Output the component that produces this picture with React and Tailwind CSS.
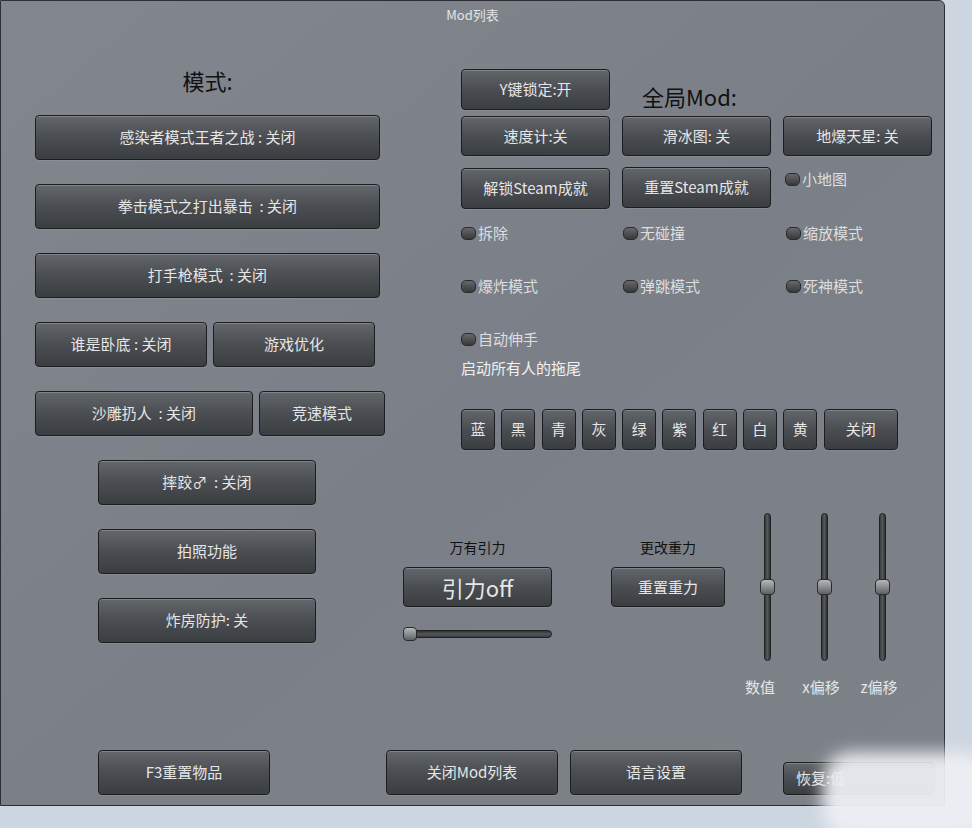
import React from "react";

const font = { fontFamily: '"Noto Sans CJK SC", "Noto Sans", sans-serif' };

// IMGUI style button
function Btn({ className = "", children }) {
  return (
    <div
      className={`flex items-center justify-center whitespace-nowrap rounded-[4px] border border-[#1c1d1f] bg-linear-to-b from-[#63666a] via-[#4a4d51] to-[#3b3e41] text-[15px] text-[#e6e6e6] shadow-[inset_0_1px_0_rgba(255,255,255,0.2),0_1px_0_rgba(255,255,255,0.08)] ${className}`}
    >
      {children}
    </div>
  );
}

function Check({ label }) {
  return (
    <div className="flex h-[20px] items-center gap-[2px] text-[15px] text-[#dedede]">
      <span className="h-[13px] w-[15px] rounded-[5px] border border-[#2a2b2d] bg-linear-to-b from-[#66686b] to-[#37393b]" />
      <span>{label}</span>
    </div>
  );
}

function VSlider({ label, shift }) {
  return (
    <div className="flex w-[20px] flex-col items-center">
      <div className="relative flex h-[148px] w-[20px] justify-center">
        <div className="h-full w-[7px] rounded-full border border-[#1f2123] bg-linear-to-r from-[#3a3c3f] via-[#55585b] to-[#2e3032]" />
        <div className="absolute top-[66px] h-[16px] w-[15px] rounded-[4px] border border-[#2a2b2d] bg-linear-to-b from-[#b4b6b8] via-[#8b8e91] to-[#5e6164]" />
      </div>
      <div className={`mt-[15px] whitespace-nowrap text-[15px] text-[#e6e6e6] ${shift}`}>{label}</div>
    </div>
  );
}

const colors = ["蓝", "黑", "青", "灰", "绿", "紫", "红", "白", "黄"];

export default function App() {
  return (
    <div className="relative h-[828px] w-[972px] overflow-hidden bg-[#cdd6e0]" style={font}>
      <div className="flex h-[806px] w-[945px] flex-col rounded-tr-[6px] border border-[#2b2e34] bg-linear-to-br from-[#82878e] via-[#7b8088] to-[#7d8289]">
        {/* title */}
        <div className="flex h-[27px] items-center justify-center text-[13px] text-[#e2e4e8]">Mod列表</div>

        <div className="flex">
          {/* left column */}
          <div className="w-[399px] pl-[34px] pt-[38px]">
            <div className="mb-[21px] w-[345px] text-center text-[22px] leading-[28px] text-[#111]">模式:</div>
            <div className="flex flex-col gap-[24px]">
              <Btn className="h-[45px] w-[345px]">感染者模式王者之战 : 关闭</Btn>
              <Btn className="h-[45px] w-[345px]">拳击模式之打出暴击&nbsp;&nbsp;: 关闭</Btn>
              <Btn className="h-[45px] w-[345px]">打手枪模式&nbsp;&nbsp;: 关闭</Btn>
              <div className="flex gap-[6px]">
                <Btn className="h-[45px] w-[172px]">谁是卧底 : 关闭</Btn>
                <Btn className="h-[45px] w-[162px]">游戏优化</Btn>
              </div>
              <div className="flex gap-[6px]">
                <Btn className="h-[45px] w-[218px]">沙雕扔人&nbsp;&nbsp;: 关闭</Btn>
                <Btn className="h-[45px] w-[126px]">竞速模式</Btn>
              </div>
              <Btn className="ml-[63px] h-[45px] w-[218px]">摔跤♂&nbsp;&nbsp;: 关闭</Btn>
              <Btn className="ml-[63px] h-[45px] w-[218px]">拍照功能</Btn>
              <Btn className="ml-[63px] h-[45px] w-[218px]">炸房防护: 关</Btn>
            </div>
          </div>

          {/* right column */}
          <div className="flex-1 pt-[41px]">
            <div className="pl-[61px]">
              <div className="flex items-end">
                <Btn className="h-[41px] w-[149px]">Y键锁定:开</Btn>
                <div className="ml-[32px] text-[22px] leading-[28px] text-[#111]">全局Mod:</div>
              </div>
              <div className="mt-[6px] flex gap-[12px]">
                <Btn className="h-[40px] w-[149px]">速度计:关</Btn>
                <Btn className="h-[40px] w-[149px]">滑冰图: 关</Btn>
                <Btn className="h-[40px] w-[149px]">地爆天星: 关</Btn>
              </div>
              <div className="mt-[12px] flex items-start gap-[12px]">
                <Btn className="h-[41px] w-[149px]">解锁Steam成就</Btn>
                <Btn className="-mt-[1px] h-[41px] w-[149px]">重置Steam成就</Btn>
                <div className="ml-[2px] mt-[1px]">
                  <Check label="小地图" />
                </div>
              </div>
              <div className="mt-[14px] grid grid-cols-[162px_163px_150px] gap-y-[33px]">
                <Check label="拆除" />
                <Check label="无碰撞" />
                <Check label="缩放模式" />
                <Check label="爆炸模式" />
                <Check label="弹跳模式" />
                <Check label="死神模式" />
                <Check label="自动伸手" />
              </div>
              <div className="mt-[9px] text-[15px] leading-[20px] text-[#f0f0f0]">启动所有人的拖尾</div>
              <div className="mt-[31px] flex gap-[6.3px]">
                {colors.map((c) => (
                  <Btn key={c} className="h-[41px] w-[34px]">
                    {c}
                  </Btn>
                ))}
                <Btn className="h-[41px] w-[74px]">关闭</Btn>
              </div>
            </div>

            {/* gravity section */}
            <div className="mt-[63px] flex items-start pl-[3px]">
              <div className="flex w-[149px] flex-col pt-[24px]">
                <div className="text-center text-[14px] leading-[20px] text-[#111]">万有引力</div>
                <Btn className="mt-[10px] h-[40px] w-[149px] text-[22px]">引力off</Btn>
                <div className="relative mt-[20px] flex h-[14px] items-center">
                  <div className="h-[8px] w-full rounded-full border border-[#1f2123] bg-linear-to-b from-[#2f3133] via-[#55585b] to-[#3a3c3f]" />
                  <div className="absolute left-0 top-0 h-[14px] w-[14px] rounded-[4px] border border-[#2a2b2d] bg-linear-to-b from-[#b4b6b8] via-[#8b8e91] to-[#5e6164]" />
                </div>
              </div>
              <div className="ml-[59px] flex w-[114px] flex-col pt-[24px]">
                <div className="text-center text-[14px] leading-[20px] text-[#111]">更改重力</div>
                <Btn className="mt-[10px] h-[40px] w-[114px]">重置重力</Btn>
              </div>
              <div className="ml-[32px]">
                <VSlider label="数值" shift="mr-[14px]" />
              </div>
              <div className="ml-[37px]">
                <VSlider label="x偏移" shift="mr-[6px]" />
              </div>
              <div className="ml-[38px]">
                <VSlider label="z偏移" shift="mr-[6px]" />
              </div>
            </div>
          </div>
        </div>

        {/* bottom row */}
        <div className="mb-[10px] mt-auto flex items-end">
          <Btn className="ml-[97px] h-[45px] w-[172px]">F3重置物品</Btn>
          <Btn className="ml-[116px] h-[45px] w-[172px]">关闭Mod列表</Btn>
          <Btn className="ml-[12px] h-[45px] w-[172px]">语言设置</Btn>
          <Btn className="ml-[41px] h-[33px] w-[152px] justify-start pl-[12px]">恢复:低</Btn>
        </div>
      </div>

      {/* watermark blur */}
      <div className="pointer-events-none absolute left-[822px] top-[752px] h-[86px] w-[170px] rounded-[30px] bg-[#eceef2]/95 blur-[8px]" />
    </div>
  );
}
